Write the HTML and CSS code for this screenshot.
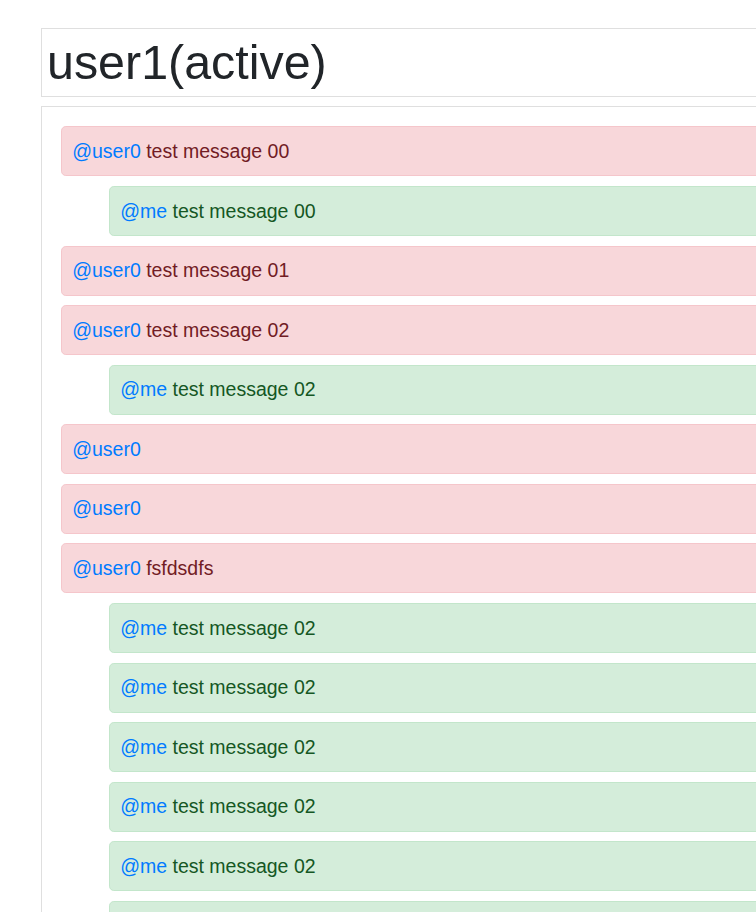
FILE: index.html
```html
<!DOCTYPE html>
<html>
<head>
<meta charset="utf-8">
<link rel="stylesheet" href="styles.css">
</head>
<body>
<div class="page">
  <div class="header-card">
    <h1 class="title">user1(active)</h1>
  </div>
  <div class="chat-card">
    <ul class="messages">
      <li class="msg in"><a class="mention">@user0</a> test message 00</li>
      <li class="msg out"><a class="mention">@me</a> test message 00</li>
      <li class="msg in"><a class="mention">@user0</a> test message 01</li>
      <li class="msg in"><a class="mention">@user0</a> test message 02</li>
      <li class="msg out"><a class="mention">@me</a> test message 02</li>
      <li class="msg in"><a class="mention">@user0</a></li>
      <li class="msg in"><a class="mention">@user0</a></li>
      <li class="msg in"><a class="mention">@user0</a> fsfdsdfs</li>
      <li class="msg out"><a class="mention">@me</a> test message 02</li>
      <li class="msg out"><a class="mention">@me</a> test message 02</li>
      <li class="msg out"><a class="mention">@me</a> test message 02</li>
      <li class="msg out"><a class="mention">@me</a> test message 02</li>
      <li class="msg out"><a class="mention">@me</a> test message 02</li>
      <li class="msg out"><a class="mention">@me</a> test message 02</li>
    </ul>
  </div>
</div>
</body>
</html>
```
FILE: styles.css
```css
html, body {
  margin: 0;
  padding: 0;
  overflow: hidden;
  background: #fff;
}
body {
  font-family: "Liberation Sans", Arial, sans-serif;
  color: #212529;
}
.page {
  width: 900px;
  padding: 28px 0 0 41px;
}
.header-card {
  border: 1px solid rgba(0, 0, 0, 0.125);
  padding: 4.8px 5px;
}
.title {
  margin: 0;
  font-size: 48.4px;
  font-weight: 400;
  line-height: 57.6px;
  color: #212529;
}
.chat-card {
  margin-top: 9px;
  border: 1px solid rgba(0, 0, 0, 0.125);
  padding: 19.2px 0 19.2px 19.2px;
}
.messages {
  list-style: none;
  margin: 0;
  padding: 0;
  display: flex;
  flex-direction: column;
  gap: 9.6px;
}
.msg {
  font-size: 19.5px;
  line-height: 28.8px;
  padding: 9.6px 10px;
  border: 1px solid transparent;
  border-radius: 4.8px;
}
.msg.in {
  background: #f8d7da;
  border-color: #f5c6cb;
  color: #721c24;
}
.msg.out {
  margin-left: 48px;
  background: #d4edda;
  border-color: #c3e6cb;
  color: #155724;
}
.mention {
  color: #007bff;
  text-decoration: none;
}
```
